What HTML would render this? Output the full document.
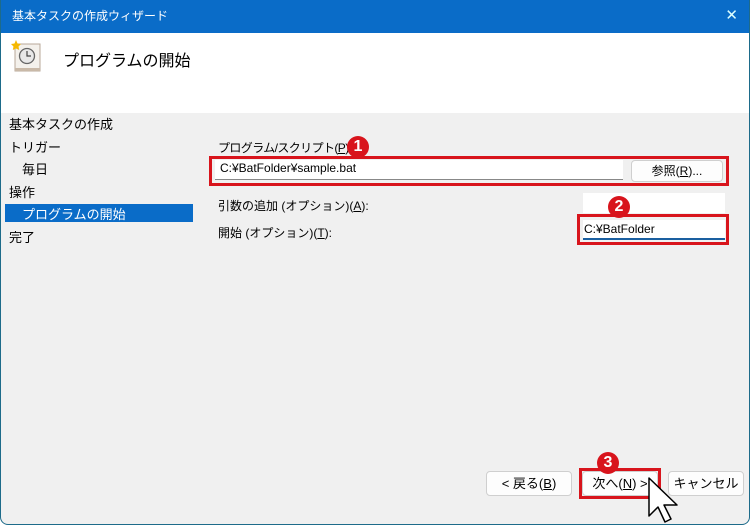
<!DOCTYPE html>
<html><head><meta charset="utf-8"><style>
*{margin:0;padding:0;box-sizing:border-box}
body{width:750px;height:525px;overflow:hidden;font-family:"Liberation Sans","Noto Sans CJK JP",sans-serif;font-size:13px;color:#000;background:#fff}
.win{position:absolute;left:0;top:0;width:750px;height:525px;background:#f0f0f0;border:1px solid #1d6b8a;border-top:none;border-radius:0 0 8px 8px;overflow:hidden}
.title{position:absolute;left:0;top:0;width:750px;height:33px;background:#0a6cc8;color:#fff;font-size:12px;line-height:33px;padding-left:11px}
.close{position:absolute;right:13px;top:7px;color:#dff;font-size:15px;line-height:18px;font-weight:300}
.head{position:absolute;left:0;top:33px;width:748px;height:80px;background:#fff}
.head .t{position:absolute;left:62px;top:14px;font-size:16px}
.abs{position:absolute;white-space:nowrap}
.sel{position:absolute;left:4px;top:204px;width:188px;height:18px;background:#0a6cc8}
.box{position:absolute;border:3px solid #d8141c}
.input{position:absolute;background:#fff;border-bottom:1px solid #888}
.btn{position:absolute;background:#fdfdfd;border:1px solid #cfcfcf;border-radius:4px;text-align:center;font-size:13px}
.num{position:absolute;width:22px;height:22px;border-radius:50%;background:#d8141c;color:#fff;font-weight:bold;font-size:16px;text-align:center;line-height:22px}
u{text-decoration:underline}
</style></head><body>
<div class="win">
<div class="title">基本タスクの作成ウィザード<span class="close">✕</span></div>
<div class="head">
<svg class="abs" style="left:8px;top:6px" width="36" height="36" viewBox="0 0 36 36">
<rect x="6" y="5" width="25" height="27" fill="#f4f1ec" stroke="#b8a89a"/>
<rect x="6" y="29" width="25" height="3" fill="#c9b9a8"/>
<circle cx="18" cy="17" r="7.5" fill="#e8e8e8" stroke="#666" stroke-width="1.3"/>
<path d="M18 12v5h4" stroke="#444" stroke-width="1.2" fill="none"/>
<path d="M7 1l1.5 3.5 3.5.5-2.5 2.5.7 3.5L7 9.5 3.8 11l.7-3.5L2 5l3.5-.5z" fill="#f5b800"/>
</svg>
<div class="t">プログラムの開始</div>
</div>
<div class="abs" style="left:8px;top:114px">基本タスクの作成</div>
<div class="abs" style="left:8px;top:137px">トリガー</div>
<div class="abs" style="left:21px;top:159px">毎日</div>
<div class="abs" style="left:8px;top:182px">操作</div>
<div class="sel"></div>
<div class="abs" style="left:21px;top:204px;color:#fff">プログラムの開始</div>
<div class="abs" style="left:8px;top:227px">完了</div>

<div class="abs" style="left:217px;top:139px;font-size:12px;letter-spacing:-0.6px">プログラム/スクリプト(<u>P</u>):</div>
<div class="input" style="left:214px;top:160px;width:408px;height:20px"></div>
<div class="abs" style="left:219px;top:161px;font-size:12px">C:¥BatFolder¥sample.bat</div>
<div class="btn" style="left:630px;top:160px;width:92px;height:22px;line-height:21px;font-size:12px">参照(<u>R</u>)...</div>
<div class="box" style="left:208px;top:156px;width:520px;height:30px"></div>
<div class="num" style="left:346px;top:136px">1</div>

<div class="abs" style="left:217px;top:197px;font-size:12px">引数の追加 (オプション)(<u>A</u>):</div>
<div class="input" style="left:582px;top:193px;width:142px;height:20px;border-bottom:none"></div>
<div class="abs" style="left:217px;top:224px;font-size:12px">開始 (オプション)(<u>T</u>):</div>
<div class="input" style="left:582px;top:220px;width:142px;height:20px;border-bottom:2px solid #1a5fa0"></div>
<div class="abs" style="left:583px;top:222px;font-size:12px">C:¥BatFolder</div>
<div class="box" style="left:576px;top:214px;width:152px;height:31px"></div>
<div class="num" style="left:607px;top:196px">2</div>

<div class="btn" style="left:485px;top:471px;width:86px;height:25px;line-height:24px">&lt; 戻る(<u>B</u>)</div>
<div class="btn" style="left:581px;top:471px;width:76px;height:25px;line-height:24px">次へ(<u>N</u>) &gt;</div>
<div class="box" style="left:578px;top:468px;width:82px;height:31px"></div>
<div class="num" style="left:596px;top:452px">3</div>
<div class="btn" style="left:667px;top:471px;width:76px;height:25px;line-height:24px">キャンセル</div>
<svg class="abs" style="left:645px;top:476px" width="34" height="48" viewBox="0 0 34 48">
<path d="M3 2v38l9-9 7 15 6-3-7-14h13z" fill="#fff" stroke="#000" stroke-width="1.5" stroke-linejoin="round"/>
</svg>
</div>
</body></html>
